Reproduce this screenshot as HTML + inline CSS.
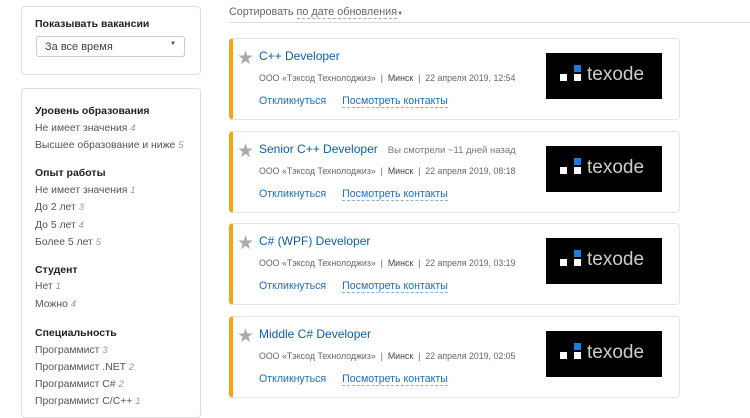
<!DOCTYPE html>
<html><head><meta charset="utf-8"><style>
*{margin:0;padding:0;box-sizing:border-box}
body{width:750px;height:400px;overflow:hidden;background:#fff;font-family:"Liberation Sans",Arial,sans-serif;color:#333;position:relative}
.a{position:absolute;white-space:nowrap}
.box{position:absolute;border:1px solid #ddd;border-radius:4px;background:#fff}
.h{font-size:10.5px;font-weight:bold;color:#222}
.i{font-size:10.4px;color:#555}
.i em{font-size:9.5px;color:#999}
.card{position:absolute;left:229px;width:451px;height:82px;border:1px solid #e4e4e4;border-left:4px solid #f5a70a;border-radius:4px}
.t{position:absolute;left:26px;top:10px;font-size:12px;color:#0a5fa9;white-space:nowrap}
.t span{font-size:9.5px;color:#777;margin-left:10px}
.m{position:absolute;left:26px;top:34px;font-size:8.8px;color:#666;white-space:nowrap}
.m b{font-weight:normal;color:#444}
.l{position:absolute;left:26px;top:56px;font-size:10.6px;color:#1c6fb8;white-space:nowrap}
.l span{margin-left:16px;border-bottom:1px dashed #8ab4d8}
.s{position:absolute;left:4px;top:8px;font-size:19px;color:#aaa}
.logo{position:absolute;left:313px;top:14px;width:116px;height:46px;background:#000}
.logo i{position:absolute;width:7px;height:7px;background:#fff}
.logo .tx{position:absolute;left:41px;top:11px;font-size:19px;color:#ccc;font-family:"Liberation Sans",sans-serif}
</style></head><body>
<div class="box" style="left:21px;top:6px;width:180px;height:69px"></div>
<div class="a h" style="left:35px;top:18px">Показывать вакансии</div>
<div class="a" style="left:36px;top:36px;width:149px;height:21px;border:1px solid #ccc;border-radius:3px;font-size:11px;color:#444;padding:4px 0 0 8px">За все время<span style="position:absolute;right:8px;top:4px;font-size:6px">▼</span></div>
<div class="box" style="left:21px;top:88px;width:180px;height:330px"></div>
<div class="a h" style="left:35px;top:105px">Уровень образования</div>
<div class="a i" style="left:35px;top:123px">Не имеет значения <em>4</em></div>
<div class="a i" style="left:35px;top:140px">Высшее образование и ниже <em>5</em></div>
<div class="a h" style="left:35px;top:167px">Опыт работы</div>
<div class="a i" style="left:35px;top:185px">Не имеет значения <em>1</em></div>
<div class="a i" style="left:35px;top:202px">До 2 лет <em>3</em></div>
<div class="a i" style="left:35px;top:220px">До 5 лет <em>4</em></div>
<div class="a i" style="left:35px;top:237px">Более 5 лет <em>5</em></div>
<div class="a h" style="left:35px;top:264px">Студент</div>
<div class="a i" style="left:35px;top:281px">Нет <em>1</em></div>
<div class="a i" style="left:35px;top:299px">Можно <em>4</em></div>
<div class="a h" style="left:35px;top:327px">Специальность</div>
<div class="a i" style="left:35px;top:345px">Программист <em>3</em></div>
<div class="a i" style="left:35px;top:362px">Программист .NET <em>2</em></div>
<div class="a i" style="left:35px;top:379px">Программист C# <em>2</em></div>
<div class="a i" style="left:35px;top:396px">Программист C/C++ <em>1</em></div>
<div class="a" style="left:229px;top:6px;font-size:10.8px;color:#666">Сортировать <span style="border-bottom:1px dashed #aaa">по дате обновления</span><span style="font-size:6px">▼</span></div>
<div class="a" style="left:229px;top:22px;width:521px;border-top:1px solid #ddd"></div>

<div class="card" style="top:38px"><div class="s">★</div><div class="t">C++ Developer</div><div class="m">ООО «Тэксод Технолоджиз» &nbsp;|&nbsp; <b>Минск</b> &nbsp;|&nbsp; 22 апреля 2019, 12:54</div><div class="l">Откликнуться<span>Посмотреть контакты</span></div><div class="logo"><i style="left:28px;top:12px;background:#1a7be0"></i><i style="left:14px;top:21px"></i><i style="left:28px;top:21px"></i><div class="tx">texode</div></div></div>
<div class="card" style="top:131px"><div class="s">★</div><div class="t">Senior C++ Developer<span>Вы смотрели ~11 дней назад</span></div><div class="m">ООО «Тэксод Технолоджиз» &nbsp;|&nbsp; <b>Минск</b> &nbsp;|&nbsp; 22 апреля 2019, 08:18</div><div class="l">Откликнуться<span>Посмотреть контакты</span></div><div class="logo"><i style="left:28px;top:12px;background:#1a7be0"></i><i style="left:14px;top:21px"></i><i style="left:28px;top:21px"></i><div class="tx">texode</div></div></div>
<div class="card" style="top:223px"><div class="s">★</div><div class="t">C# (WPF) Developer</div><div class="m">ООО «Тэксод Технолоджиз» &nbsp;|&nbsp; <b>Минск</b> &nbsp;|&nbsp; 22 апреля 2019, 03:19</div><div class="l">Откликнуться<span>Посмотреть контакты</span></div><div class="logo"><i style="left:28px;top:12px;background:#1a7be0"></i><i style="left:14px;top:21px"></i><i style="left:28px;top:21px"></i><div class="tx">texode</div></div></div>
<div class="card" style="top:316px"><div class="s">★</div><div class="t">Middle C# Developer</div><div class="m">ООО «Тэксод Технолоджиз» &nbsp;|&nbsp; <b>Минск</b> &nbsp;|&nbsp; 22 апреля 2019, 02:05</div><div class="l">Откликнуться<span>Посмотреть контакты</span></div><div class="logo"><i style="left:28px;top:12px;background:#1a7be0"></i><i style="left:14px;top:21px"></i><i style="left:28px;top:21px"></i><div class="tx">texode</div></div></div>
</body></html>
